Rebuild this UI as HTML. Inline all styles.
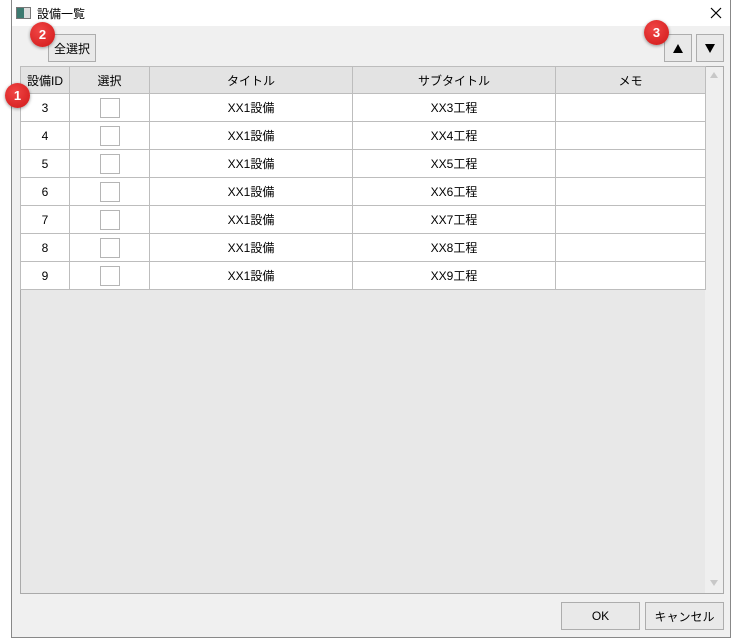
<!DOCTYPE html>
<html><head><meta charset="utf-8"><style>
*{box-sizing:border-box;margin:0;padding:0}
body{width:733px;height:639px;background:#fff;font-family:"Liberation Sans","Noto Sans CJK JP",sans-serif;font-size:12px;color:#000;position:relative;overflow:hidden}
.win{position:absolute;left:11px;top:0;width:720px;height:638px;border:1px solid #888;border-top:none;background:#f0f0f0}
.title{position:absolute;left:0;top:0;width:718px;height:26px;background:#fff}
.abs{position:absolute}
.btn{position:absolute;border:1px solid #adadad;background:#e9e9e9;display:flex;align-items:center;justify-content:center;font-size:12px}
table{position:absolute;left:20px;top:66px;border-collapse:collapse;background:#fff}
td,th{border:1px solid #bdbdbd;height:28px;text-align:center;font-weight:normal;font-size:12px}
th{background:#e3e3e3;height:27px}
.cb{display:inline-block;width:20px;height:20px;border:1px solid #b5b5b5;background:#fff;vertical-align:middle}
.badge{position:absolute;width:25px;height:25px;border-radius:50%;background:radial-gradient(circle at 40% 35%,#f04545,#d01818);color:#fff;font-size:13px;font-weight:bold;display:flex;align-items:center;justify-content:center;box-shadow:0 1px 3px rgba(0,0,0,.4)}
</style></head><body>
<div class="win">
 <div class="title">
  <div class="abs" style="left:4px;top:7px;width:15px;height:12px;border:1px solid #777;background:linear-gradient(90deg,#3d7a70 0 55%,#ddd 55%)"></div>
  <div class="abs" style="left:25px;top:5px;font-size:12px">設備一覧</div>
  <svg class="abs" style="left:698px;top:7px" width="12" height="12"><path d="M1 1L11 11M11 1L1 11" stroke="#000" stroke-width="1.2"/></svg>
 </div>
</div>
<div class="abs" style="left:20px;top:66px;width:704px;height:528px;border:1px solid #aaa;background:#e8e8e8"></div>
<div class="abs" style="left:705px;top:67px;width:18px;height:526px;background:#efefef"></div>
<svg class="abs" style="left:710px;top:72px" width="8" height="6"><path d="M4 0L8 6H0Z" fill="#c8c8c8"/></svg>
<svg class="abs" style="left:710px;top:580px" width="8" height="6"><path d="M0 0H8L4 6Z" fill="#c8c8c8"/></svg>
<table>
<tr><th style="width:49px">設備ID</th><th style="width:80px">選択</th><th style="width:203px">タイトル</th><th style="width:203px">サブタイトル</th><th style="width:150px">メモ</th></tr>
<tr><td>3</td><td><span class="cb"></span></td><td>XX1設備</td><td>XX3工程</td><td></td></tr>
<tr><td>4</td><td><span class="cb"></span></td><td>XX1設備</td><td>XX4工程</td><td></td></tr>
<tr><td>5</td><td><span class="cb"></span></td><td>XX1設備</td><td>XX5工程</td><td></td></tr>
<tr><td>6</td><td><span class="cb"></span></td><td>XX1設備</td><td>XX6工程</td><td></td></tr>
<tr><td>7</td><td><span class="cb"></span></td><td>XX1設備</td><td>XX7工程</td><td></td></tr>
<tr><td>8</td><td><span class="cb"></span></td><td>XX1設備</td><td>XX8工程</td><td></td></tr>
<tr><td>9</td><td><span class="cb"></span></td><td>XX1設備</td><td>XX9工程</td><td></td></tr>
</table>
<div class="btn" style="left:48px;top:34px;width:48px;height:28px">全選択</div>
<div class="btn" style="left:664px;top:34px;width:28px;height:28px"><svg width="10" height="9"><path d="M5 0L10 9H0Z" fill="#000"/></svg></div>
<div class="btn" style="left:696px;top:34px;width:28px;height:28px"><svg width="10" height="9"><path d="M0 0H10L5 9Z" fill="#000"/></svg></div>
<div class="btn" style="left:561px;top:602px;width:79px;height:28px">OK</div>
<div class="btn" style="left:645px;top:602px;width:79px;height:28px">キャンセル</div>
<div class="badge" style="left:30px;top:22px">2</div>
<div class="badge" style="left:5px;top:83px">1</div>
<div class="badge" style="left:644px;top:20px">3</div>
</body></html>
